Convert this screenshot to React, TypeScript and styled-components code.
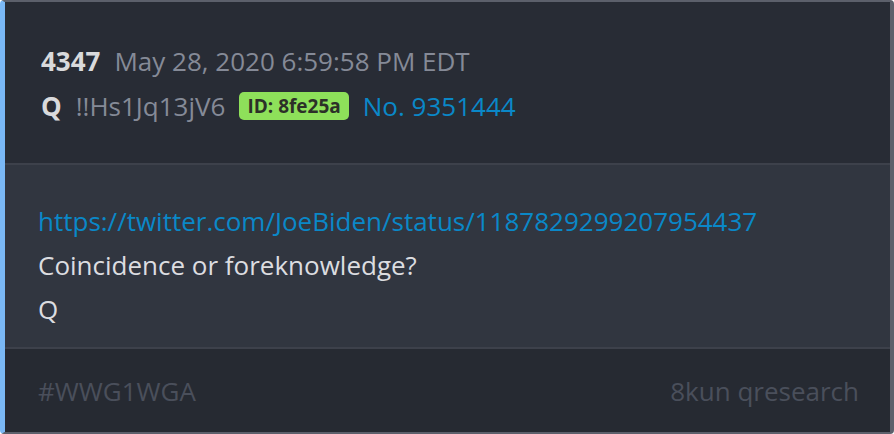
import React from 'react';
import styled, { createGlobalStyle } from 'styled-components';

const GlobalStyle = createGlobalStyle`
  html, body {
    margin: 0;
    padding: 0;
    background: #ffffff;
  }
  body {
    font-family: 'Open Sans', 'Noto Sans', sans-serif;
  }
`;

const Card = styled.article`
  width: 894px;
  height: 434px;
  box-sizing: border-box;
  display: flex;
  flex-direction: column;
  background: #282c35;
  border: 1px solid #5c606b;
  border-top-width: 2px;
  border-right-width: 4px;
  border-bottom-width: 2px;
  border-left: 5px solid #7ab8f5;
  border-radius: 4px;
  overflow: hidden;
`;

const Header = styled.header`
  height: 163px;
  flex-shrink: 0;
  box-sizing: border-box;
  padding: 36px 0 0 36px;
  background: #282c35;
  border-bottom: 2px solid #3d414b;
`;

const MetaRow = styled.div`
  display: flex;
  align-items: center;
  gap: 14px;
  height: 45px;
  font-size: 26px;
`;

const PostNumber = styled.span`
  font-weight: 700;
  color: #d9dadc;
`;

const Muted = styled.span`
  color: #858a97;
`;

const Badge = styled.span`
  background: #8ee05a;
  color: #2c3028;
  font-weight: 700;
  font-size: 19px;
  line-height: 26px;
  padding: 1px 8px;
  border-radius: 5px;
`;

const PostLink = styled.a`
  color: #0a88c8;
  text-decoration: none;
`;

const Body = styled.section`
  flex: 1;
  box-sizing: border-box;
  padding: 34px 0 0 33px;
  background: #313640;
  border-bottom: 2px solid #3d414b;
`;

const Line = styled.p`
  margin: 0;
  font-size: 26px;
  line-height: 44px;
  color: #dcdde0;
`;

const Footer = styled.footer`
  height: 83px;
  flex-shrink: 0;
  box-sizing: border-box;
  display: flex;
  align-items: center;
  justify-content: space-between;
  padding: 0 31px 0 33px;
  background: #262a32;
  font-size: 26px;
  color: #4a4f5b;
`;

export default function App() {
  return (
    <>
      <GlobalStyle />
      <Card>
        <Header>
          <MetaRow>
            <PostNumber>4347</PostNumber>
            <Muted>May 28, 2020 6:59:58 PM EDT</Muted>
          </MetaRow>
          <MetaRow>
            <PostNumber>Q</PostNumber>
            <Muted>!!Hs1Jq13jV6</Muted>
            <Badge>ID: 8fe25a</Badge>
            <PostLink href="#">No. 9351444</PostLink>
          </MetaRow>
        </Header>
        <Body>
          <Line>
            <PostLink href="#">https://twitter.com/JoeBiden/status/1187829299207954437</PostLink>
          </Line>
          <Line>Coincidence or foreknowledge?</Line>
          <Line>Q</Line>
        </Body>
        <Footer>
          <span>#WWG1WGA</span>
          <span>8kun qresearch</span>
        </Footer>
      </Card>
    </>
  );
}
